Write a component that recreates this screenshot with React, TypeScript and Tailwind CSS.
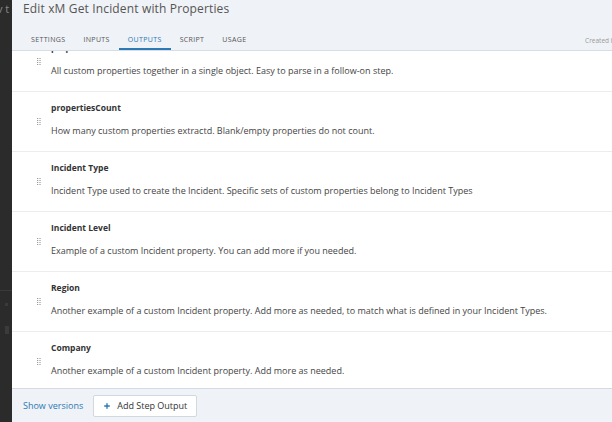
import { Plus } from 'lucide-react'

const rows = [
    { title: 'properties', desc: 'All custom properties together in a single object. Easy to parse in a follow-on step.' },
    { title: 'propertiesCount', desc: 'How many custom properties extractd. Blank/empty properties do not count.' },
    { title: 'Incident Type', desc: 'Incident Type used to create the Incident. Specific sets of custom properties belong to Incident Types' },
    { title: 'Incident Level', desc: 'Example of a custom Incident property. You can add more if you needed.' },
    { title: 'Region', desc: 'Another example of a custom Incident property. Add more as needed, to match what is defined in your Incident Types.' },
    { title: 'Company', desc: 'Another example of a custom Incident property. Add more as needed.' },
]

const tabs = ['SETTINGS', 'INPUTS', 'OUTPUTS', 'SCRIPT', 'USAGE']

function Handle() {
    // little dotted drag grip
    return (
        <svg width="4" height="8" viewBox="0 0 4 8" className="block">
            {[0, 2, 4, 6].map((y) => (
                <g key={y}>
                    <rect x="0" y={y} width="1.2" height="1" fill="#9a9a9a" />
                    <rect x="2.4" y={y} width="1.2" height="1" fill="#9a9a9a" />
                </g>
            ))}
        </svg>
    )
}

export default function App() {
    return (
        <div className="w-[612px] h-[422px] flex overflow-hidden bg-white font-['Open_Sans',sans-serif]">
            {/* dark app strip behind the modal */}
            <div className="w-[12px] bg-[#2b2b2b] flex flex-col shrink-0 overflow-hidden">
                <div className="text-[11px] text-[#8a8a8a] -ml-[3px] mt-[1px] whitespace-nowrap">v t</div>
                <div className="mt-[272px] h-px bg-[#3a3a3a]" />
                <div className="mt-[12px] ml-[5px] w-[3px] h-[3px] bg-[#3a3a3a]" />
                <div className="mt-[20px] ml-[5px] w-[4px] h-[8px] bg-[#3b3b3b]" />
            </div>

            <div className="flex-1 flex flex-col min-w-0">
                {/* header */}
                <div className="h-[51px] bg-[#eff2f6] border-b border-[#d7dde6] flex flex-col shrink-0 relative">
                    <div className="pl-[11px] pt-[0px] text-[12px] leading-[17px] text-[#555] tracking-[0.15px]">Edit xM Get Incident with Properties</div>
                    <div className="flex pl-[10px] mt-auto">
                        {tabs.map((t) => (
                            <div
                                key={t}
                                className={`px-[9px] h-[19px] pt-[5px] text-[7px] leading-[8px] tracking-[0.35px] border-b-[2px] ${t === 'OUTPUTS' ? 'text-[#2b79b5] border-[#2b79b5]' : 'text-[#555] border-transparent'}`}
                            >
                                {t}
                            </div>
                        ))}
                    </div>
                    <div className="absolute right-[-6px] bottom-[4px] text-[6.5px] text-[#9a9a9a] whitespace-nowrap">Created by</div>
                </div>

                {/* outputs list */}
                <div className="flex-1 overflow-hidden">
                    <div className="-mt-[19px]">
                        {rows.map((r) => (
                            <div key={r.title} className="h-[60px] border-b border-[#ececec] flex pl-[25px] pt-[11px]">
                                <div className="w-[14px] pt-[15px] shrink-0">
                                    <Handle />
                                </div>
                                <div className="flex flex-col">
                                    <div className="text-[8.5px] leading-[10px] font-bold text-[#333]">{r.title}</div>
                                    <div className="mt-[13px] text-[9px] leading-[10px] text-[#444] whitespace-nowrap">{r.desc}</div>
                                </div>
                            </div>
                        ))}
                    </div>
                </div>

                {/* footer */}
                <div className="h-[34px] bg-[#eff2f6] border-t border-[#d5d9e4] flex items-center pl-[11px] gap-[10px] shrink-0">
                    <span className="text-[9px] text-[#2b79b5]">Show versions</span>
                    <button className="h-[22px] px-[9px] bg-white border border-[#d3d8df] rounded-[2px] flex items-center gap-[6px]">
                        <Plus className="w-[8px] h-[8px] text-[#2b79b5]" strokeWidth={4} />
                        <span className="text-[9px] text-[#333]">Add Step Output</span>
                    </button>
                </div>
            </div>
        </div>
    )
}
